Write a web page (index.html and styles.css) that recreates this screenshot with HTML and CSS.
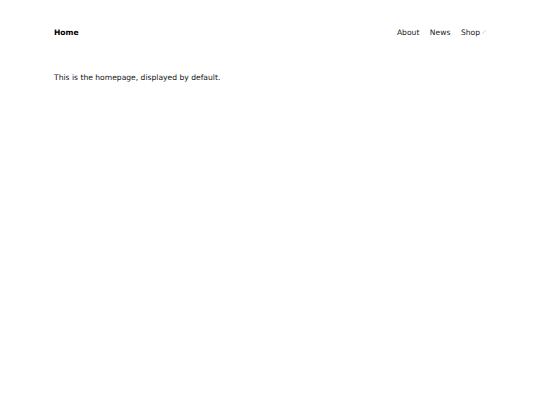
FILE: index.html
```html
<!DOCTYPE html>
<html>
<head>
<meta charset="utf-8">
<link rel="stylesheet" href="styles.css">
</head>
<body>
<div class="page">
  <header class="header">
    <a class="brand">Home</a>
    <nav class="nav">
      <a class="nav-link">About</a>
      <a class="nav-link">News</a>
      <a class="nav-link">Shop<span class="caret"><svg width="4" height="4" viewBox="0 0 4 4"><path d="M0.5 3.5 L3.5 0.5" stroke="#bbb" stroke-width="0.8" fill="none"/></svg></span></a>
    </nav>
  </header>
  <main class="content">
    <p class="text">This is the homepage, displayed by default.</p>
  </main>
</div>
</body>
</html>
```
FILE: styles.css
```css
html, body { margin: 0; padding: 0; background: #fff; }
body { font-family: "DejaVu Sans", sans-serif; font-size: 7.6px; color: #111; }
.page { padding: 0 54px; }
.header { display: flex; justify-content: space-between; align-items: center; height: 64px; }
.brand { font-weight: bold; color: #000; }
.nav { display: flex; gap: 10.5px; }
.nav-link { color: #222; display: flex; align-items: center; }
.caret { margin-left: 2px; display: inline-flex; }
.text { margin: 9px 0 0; line-height: 10px; }
```
